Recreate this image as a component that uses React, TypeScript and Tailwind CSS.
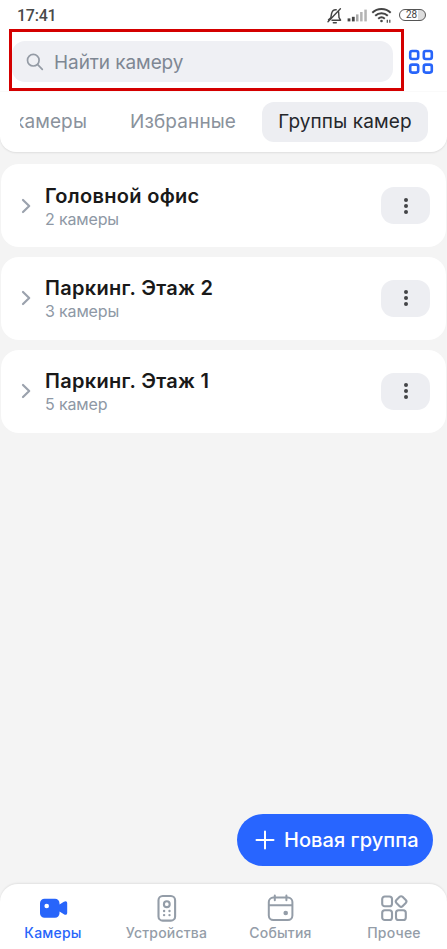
import React from "react";

const groups = [
  { name: "Головной офис", count: "2 камеры" },
  { name: "Паркинг. Этаж 2", count: "3 камеры" },
  { name: "Паркинг. Этаж 1", count: "5 камер" },
];

function StatusBar() {
  return (
    <div className="flex h-[29px] shrink-0 items-center pt-[2px] pl-[17px] pr-[21px]">
      <span className="font-['Roboto',sans-serif] text-[16px] leading-[18px] font-medium tracking-[-0.25px] text-[#4a4a4a]">17:41</span>
      <svg className="ml-auto" width="16" height="18" viewBox="0 0 16 18" fill="none" stroke="#454545" strokeWidth="1.4" strokeLinecap="round" strokeLinejoin="round">
        <path d="M1.5 12.7 3.8 10.7 4.6 6.5C5.2 3.9 6.8 2.6 9.2 2.8M11.6 4.8 12 10.6 13.6 13.2H5M6.3 15.8h3M1 14.8 13.4 1.8" />
      </svg>
      <svg className="ml-[4px]" width="22" height="18" viewBox="0 0 22 18">
        <rect x="0.6" y="11.4" width="2.8" height="3" fill="#454545" />
        <rect x="4.9" y="9.8" width="2.8" height="4.6" fill="#454545" />
        <rect x="9" y="7.4" width="2.5" height="7" fill="#aaa" />
        <rect x="13.1" y="5" width="2.5" height="9.4" fill="#b4b4b4" />
        <rect x="17.3" y="2.6" width="2.5" height="11.8" fill="#b4b4b4" />
      </svg>
      <svg className="ml-[2px]" width="21" height="18" viewBox="0 0 21 18" fill="none" stroke="#454545" strokeWidth="2">
        <path d="M1.3 5.7C6.5.8 14.5.8 19.7 5.7M4.2 8.8c3.7-3.4 8.9-3.4 12.6 0M7.2 11.8c2-1.8 4.6-1.8 6.6 0" />
        <circle cx="10.5" cy="14" r="1.3" fill="#454545" stroke="none" />
        <path d="M16.3 12.8v3M18.8 12.8v3" strokeWidth="1.2" />
      </svg>
      <div className="-mt-px ml-[7px] flex h-[12px] w-[27px] items-center justify-center rounded-full border border-[#555] bg-[linear-gradient(90deg,#fff_72%,#ddd_72%)] pr-[2px] font-['Roboto',sans-serif] text-[10px] leading-none text-[#444]">28</div>
    </div>
  );
}

function Header() {
  return (
    <header className="flex h-[152px] shrink-0 flex-col rounded-b-[16px] bg-white shadow-[0_1px_2px_rgba(0,0,0,0.09)]">
      <StatusBar />
      <div className="flex h-[62px] shrink-0 items-center pl-[9px]">
        <div className="h-[62px] w-[395px] border-[3px] border-[#d40000] pt-[9px]">
          <div className="flex h-[41px] w-[381px] items-center rounded-[13px] bg-[#eff0f4] pl-[14px]">
            <svg width="18" height="18" viewBox="0 0 18 18" fill="none" stroke="#949ba5" strokeWidth="1.7" strokeLinecap="round">
              <circle cx="7.3" cy="7.2" r="5.8" />
              <path d="m11.7 11.7 4.6 4.6" />
            </svg>
            <span className="ml-[10px] pt-[2px] text-[19px] leading-6 tracking-[-0.08px] text-[#7e8793]">Найти камеру</span>
          </div>
        </div>
        <svg className="ml-[4px] mt-[4px]" width="26" height="26" viewBox="0 0 26 26" fill="none" stroke="#2865fa" strokeWidth="2.6">
          <rect x="2.2" y="2" width="8" height="8" rx="2" />
          <rect x="15.8" y="2" width="8" height="8" rx="2" />
          <rect x="2.2" y="15.6" width="8" height="8" rx="2" />
          <rect x="15.8" y="15.6" width="8" height="8" rx="2" />
        </svg>
      </div>
      <div className="flex h-[61px] items-center border-t border-[#fafafa] pl-[20px] text-[19px] leading-6 tracking-[0.12px] text-[#8a929c]">
        <div className="flex w-[67px] justify-end overflow-hidden whitespace-nowrap"><span>камеры</span></div>
        <span className="ml-[43px] w-[132px] whitespace-nowrap">Избранные</span>
        <div className="flex h-10 w-[166px] items-center justify-center rounded-[12px] bg-[#edeef2] whitespace-nowrap text-[#25272b]">Группы камер</div>
      </div>
    </header>
  );
}

function CameraIcon() {
  return (
    <svg width="30" height="30" viewBox="0 0 30 30" fill="#2865fa">
      <path fillRule="evenodd" d="M6.5 5.7H17a4.5 4.5 0 0 1 4.5 4.5v1.3l4.4-2.8c1.9-1.2 3.3-.4 3.3 1.5v9.6c0 1.9-1.4 2.7-3.3 1.5l-4.4-2.8v1.8a4.5 4.5 0 0 1-4.5 4.5H6.5A4.5 4.5 0 0 1 2 20.3V10.2a4.5 4.5 0 0 1 4.5-4.5Zm2.2 5a2.3 2.3 0 1 0 0 4.6 2.3 2.3 0 0 0 0-4.6Z" />
    </svg>
  );
}

function DeviceIcon() {
  return (
    <svg width="30" height="30" viewBox="0 0 30 30" fill="none" stroke="#949da8" strokeWidth="2.1">
      <rect x="6.5" y="3" width="16.6" height="24.6" rx="4.2" />
      <circle cx="14.8" cy="11.2" r="2.9" />
      <g fill="#949da8" stroke="none">
        <circle cx="12.1" cy="18" r="1.2" /><circle cx="17.5" cy="18" r="1.2" />
        <circle cx="12.1" cy="22.1" r="1.2" /><circle cx="17.5" cy="22.1" r="1.2" />
      </g>
    </svg>
  );
}

function CalendarIcon() {
  return (
    <svg width="30" height="30" viewBox="0 0 30 30" fill="none" stroke="#949da8" strokeWidth="2" strokeLinecap="round">
      <rect x="2.8" y="4.6" width="23.6" height="22.4" rx="4.5" />
      <path d="M3 12.2h23M8.8 2.4v4.8M20.4 2.4v4.8" />
      <circle cx="19.7" cy="20" r="2.3" fill="#949da8" stroke="none" />
    </svg>
  );
}

function MoreIcon() {
  return (
    <svg width="30" height="30" viewBox="0 0 30 30" fill="none" stroke="#949da8" strokeWidth="2.1">
      <rect x="3.2" y="3.5" width="9.8" height="9.8" rx="2.6" />
      <rect x="3.2" y="17.2" width="9.8" height="9.8" rx="2.6" />
      <rect x="17" y="17.2" width="9.8" height="9.8" rx="2.6" />
      <rect x="17.8" y="4.2" width="8.6" height="8.6" rx="2" transform="rotate(45 22.1 8.5)" />
    </svg>
  );
}

const tabs = [
  { label: "Камеры", icon: <CameraIcon />, style: "text-[#2865fa] w-[106px]" },
  { label: "Устройства", icon: <DeviceIcon />, style: "text-[#949da8] w-[121px]" },
  { label: "События", icon: <CalendarIcon />, style: "text-[#949da8] w-[107px]" },
  { label: "Прочее", icon: <MoreIcon />, style: "text-[#949da8] w-[120px]" },
];

export default function App() {
  return (
    <div className="flex h-[949px] w-[447px] flex-col overflow-hidden bg-[#f4f4f4] font-['Inter',sans-serif]">
      <Header />
      <main className="flex flex-1 flex-col px-px pt-[12px]">
        <div className="flex flex-col gap-[9.5px]">
          {groups.map((g) => (
            <section key={g.name} className="flex h-[83.25px] items-center rounded-[18px] bg-white pl-[20px] pr-[16px]">
              <svg width="12" height="16" viewBox="0 0 12 16" fill="none" stroke="#9ba2ad" strokeWidth="2.2" strokeLinecap="round" strokeLinejoin="round">
                <path d="m2 2 6.2 6L2 14" />
              </svg>
              <div className="ml-[12px] flex flex-col pt-px whitespace-nowrap">
                <h2 className="text-[20px] leading-[25px] font-semibold tracking-[0.3px] text-[#191919]">{g.name}</h2>
                <span className="text-[16px] leading-[20px] tracking-[-0.15px] text-[#8e98a5]">{g.count}</span>
              </div>
              <button className="ml-auto flex h-[37px] w-[49px] items-center justify-center rounded-[13px] bg-[#edeef2]">
                <svg width="6" height="18" viewBox="0 0 6 18" fill="#434447">
                  <circle cx="3" cy="3.1" r="2" /><circle cx="3" cy="9" r="2" /><circle cx="3" cy="14.9" r="2" />
                </svg>
              </button>
            </section>
          ))}
        </div>
        <button className="mt-auto mr-[13px] mb-[18px] flex h-[52px] w-[196px] items-center self-end rounded-full bg-[#2865ff] pl-[18px] whitespace-nowrap text-white">
          <svg width="20" height="20" viewBox="0 0 20 20" stroke="white" strokeWidth="2" strokeLinecap="round"><path d="M10 1.5v17M1.5 10h17" /></svg>
          <span className="ml-[9px] text-[20px] leading-6 font-medium tracking-[0.05px]">Новая группа</span>
        </button>
      </main>
      <nav className="flex h-[65px] shrink-0 rounded-t-[18px] bg-white shadow-[0_-1px_2px_rgba(0,0,0,0.08)]">
        {tabs.map((t) => (
          <div key={t.label} className={`flex shrink-0 flex-col items-center pt-[9px] ${t.style}`}>
            {t.icon}
            <span className="mt-px text-[14px] leading-[18px] font-medium tracking-[0.2px]">{t.label}</span>
          </div>
        ))}
      </nav>
    </div>
  );
}
